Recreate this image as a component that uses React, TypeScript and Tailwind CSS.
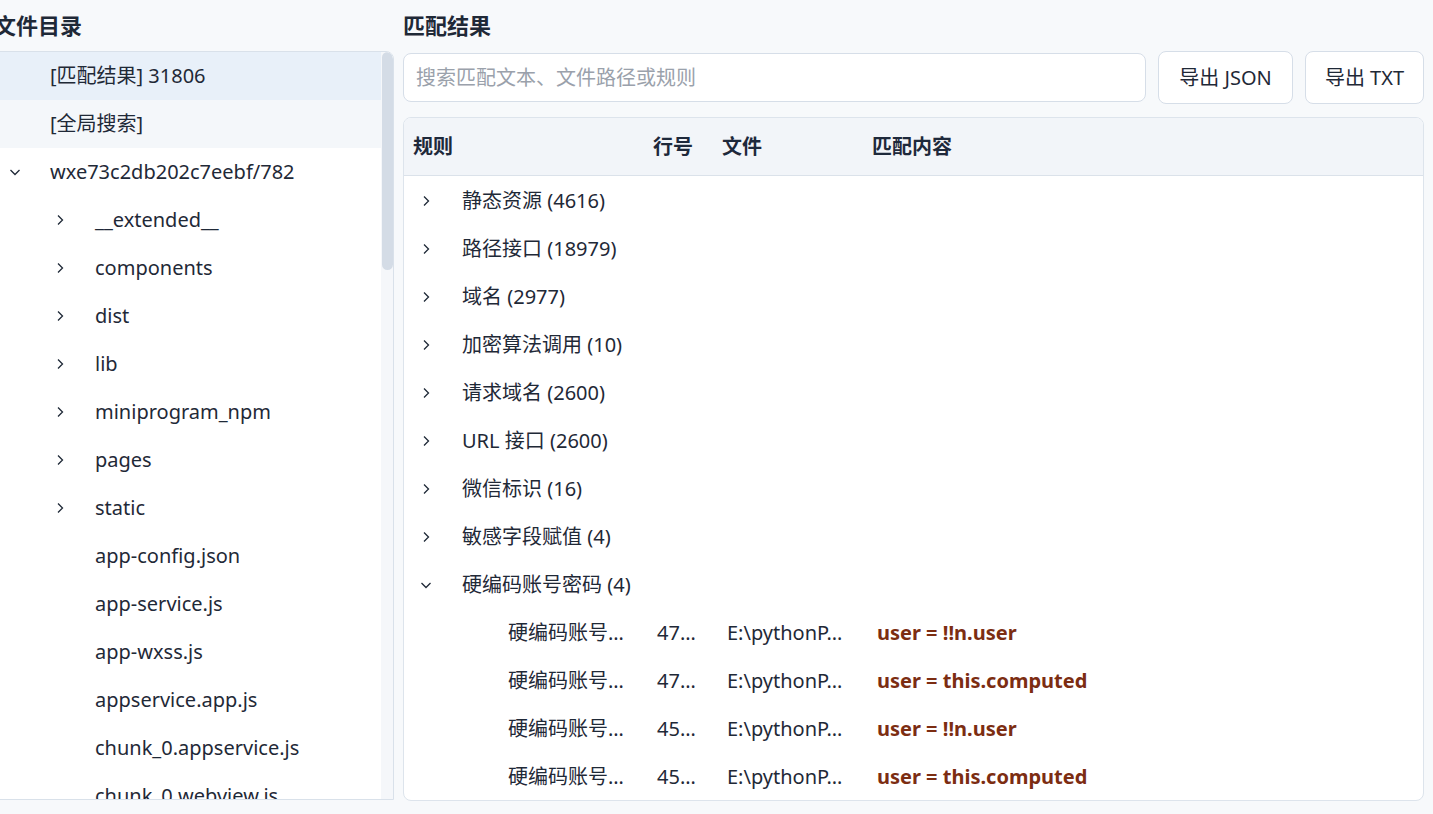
const FONT = '"Segoe UI", "Noto Sans", "Noto Sans CJK SC", sans-serif'

type TreeItem = { label: string; depth: number; arrow?: 'right' | 'down'; tone?: 'active' | 'soft' }

const treeItems: TreeItem[] = [
  { label: '[匹配结果] 31806', depth: 0, tone: 'active' },
  { label: '[全局搜索]', depth: 0, tone: 'soft' },
  { label: 'wxe73c2db202c7eebf/782', depth: 0, arrow: 'down' },
  { label: '__extended__', depth: 1, arrow: 'right' },
  { label: 'components', depth: 1, arrow: 'right' },
  { label: 'dist', depth: 1, arrow: 'right' },
  { label: 'lib', depth: 1, arrow: 'right' },
  { label: 'miniprogram_npm', depth: 1, arrow: 'right' },
  { label: 'pages', depth: 1, arrow: 'right' },
  { label: 'static', depth: 1, arrow: 'right' },
  { label: 'app-config.json', depth: 1 },
  { label: 'app-service.js', depth: 1 },
  { label: 'app-wxss.js', depth: 1 },
  { label: 'appservice.app.js', depth: 1 },
  { label: 'chunk_0.appservice.js', depth: 1 },
  { label: 'chunk_0.webview.js', depth: 1 },
]

const groups = [
  { name: '静态资源 (4616)' },
  { name: '路径接口 (18979)' },
  { name: '域名 (2977)' },
  { name: '加密算法调用 (10)' },
  { name: '请求域名 (2600)' },
  { name: 'URL 接口 (2600)' },
  { name: '微信标识 (16)' },
  { name: '敏感字段赋值 (4)' },
  { name: '硬编码账号密码 (4)', open: true },
]

const matches = [
  { rule: '硬编码账号…', line: '47…', file: 'E:\\pythonP…', text: 'user = !!n.user' },
  { rule: '硬编码账号…', line: '47…', file: 'E:\\pythonP…', text: 'user = this.computed' },
  { rule: '硬编码账号…', line: '45…', file: 'E:\\pythonP…', text: 'user = !!n.user' },
  { rule: '硬编码账号…', line: '45…', file: 'E:\\pythonP…', text: 'user = this.computed' },
]

function Chevron({ dir }: { dir: 'right' | 'down' }) {
  return (
    <svg width="12" height="12" viewBox="0 0 12 12" fill="none" stroke="#1f2937" strokeWidth="1.3">
      {dir === 'right' ? <polyline points="4,1.5 8.5,6 4,10.5" /> : <polyline points="1.5,4 6,8.5 10.5,4" />}
    </svg>
  )
}

function FileTree() {
  return (
    <div className="flex flex-col w-[400px] -ml-[6px] pb-[14px] shrink-0">
      <div className="h-[51px] flex items-center text-[22px] font-bold text-[#1f2937]">文件目录</div>
      <div className="flex-1 flex min-h-0 bg-white border border-[#d9e1ea] rounded-tr-lg overflow-hidden">
        <div className="flex-1 min-w-0 overflow-hidden">
          {treeItems.map((item, i) => (
            <div
              key={i}
              className={`h-[48px] shrink-0 flex items-center text-[20px] text-[#1f2937] whitespace-nowrap ${
                item.tone === 'active' ? 'bg-[#e8f0f9]' : item.tone === 'soft' ? 'bg-[#f4f7fa]' : ''
              }`}
            >
              <div className={`flex items-center justify-center shrink-0 ${item.depth === 0 ? 'w-[40px]' : 'w-[85px] pl-[44px]'}`}>
                {item.arrow && <Chevron dir={item.arrow} />}
              </div>
              <span className="pl-[15px]">{item.label}</span>
            </div>
          ))}
        </div>
        <div className="w-[12px] shrink-0 bg-[#f5f7fa] flex justify-center">
          <div className="w-[11px] h-[218px] rounded-full bg-[#d4dce6]" />
        </div>
      </div>
    </div>
  )
}

function Results() {
  return (
    <div className="flex-1 min-w-0 flex flex-col pl-[9px] pr-[9px] pb-[13px]">
      <div className="h-[51px] flex items-center text-[22px] font-bold text-[#1f2937]">匹配结果</div>
      <div className="h-[53px] flex items-center gap-[12px]">
        <div className="flex-1 h-[49px] bg-white border border-[#d6dee8] rounded-lg flex items-center px-[12px] text-[20px] text-[#9aa1ab]">
          搜索匹配文本、文件路径或规则
        </div>
        <button className="h-[53px] w-[135px] bg-white border border-[#d6dee8] rounded-lg text-[20px] text-[#1f2937]">
          导出 JSON
        </button>
        <button className="h-[53px] w-[119px] bg-white border border-[#d6dee8] rounded-lg text-[20px] text-[#1f2937]">
          导出 TXT
        </button>
      </div>
      <div className="mt-[13px] flex-1 min-h-0 bg-white border border-[#dde4ec] rounded-lg overflow-hidden flex flex-col">
        <div className="h-[58px] shrink-0 bg-[#f2f5f9] border-b border-[#dbe2ea] grid grid-cols-[240px_69px_150px_1fr] items-center pl-[9px] pt-[1px] text-[20px] font-bold text-[#1e293b]">
          <span>规则</span>
          <span>行号</span>
          <span>文件</span>
          <span>匹配内容</span>
        </div>
        <div className="flex-1 overflow-hidden pt-[1px]">
          {groups.map((g, i) => (
            <div key={i}>
              <div className="h-[48px] flex items-center text-[20px] text-[#1f2937] whitespace-nowrap">
                <div className="w-[58px] shrink-0 flex justify-end pr-[30px]">
                  <Chevron dir={g.open ? 'down' : 'right'} />
                </div>
                <span>{g.name}</span>
              </div>
              {g.open &&
                matches.map((m, j) => (
                  <div
                    key={j}
                    className="h-[48px] grid grid-cols-[240px_69px_150px_1fr] items-center pl-[9px] text-[20px] text-[#1f2937] whitespace-nowrap"
                  >
                    <span className="pl-[95px]">{m.rule}</span>
                    <span className="pl-[4px]">{m.line}</span>
                    <span className="pl-[5px]">{m.file}</span>
                    <span className="pl-[5px] font-bold text-[#7c2d12]">{m.text}</span>
                  </div>
                ))}
            </div>
          ))}
        </div>
      </div>
    </div>
  )
}

export default function App() {
  return (
    <div className="w-[1433px] h-[814px] overflow-hidden bg-[#f7f9fb] flex" style={{ fontFamily: FONT }}>
      <FileTree />
      <Results />
    </div>
  )
}
